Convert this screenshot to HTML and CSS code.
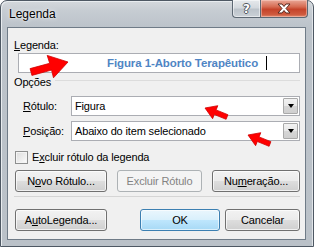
FILE: index.html
```html
<!DOCTYPE html>
<html lang="pt">
<head>
<meta charset="utf-8">
<title>Legenda</title>
<link rel="stylesheet" href="styles.css">
</head>
<body>
<div class="window">
  <div class="titlebar">
    <span class="title">Legenda</span>
    <div class="caption-btns">
      <div class="cbtn help"><span>?</span></div>
      <div class="cbtn close">
        <svg width="16" height="11" viewBox="0 0 16 11"><path d="M2 1h4l2 2.5L10 1h4l-4 4.5 4 4.5h-4L8 7.5 6 10H2l4-4.5z" fill="#fff" stroke="#5a2a20" stroke-width="1" stroke-linejoin="round"/></svg>
      </div>
    </div>
  </div>
  <div class="client">
    <div class="lbl"><u>L</u>egenda:</div>
    <div class="caption-input">
      <span class="caption-text">Figura 1-Aborto Terapêutico</span><span class="caret"></span>
    </div>
    <div class="group-row">
      <span class="group-title">Opções</span>
      <span class="group-line"></span>
    </div>
    <div class="field-row first">
      <span class="field-lbl"><u>R</u>ótulo:</span>
      <div class="combo"><span class="combo-text">Figura</span><span class="drop"><span class="tri"></span></span></div>
    </div>
    <div class="field-row">
      <span class="field-lbl"><u>P</u>osição:</span>
      <div class="combo"><span class="combo-text">Abaixo do item selecionado</span><span class="drop"><span class="tri"></span></span></div>
    </div>
    <div class="check-row">
      <span class="checkbox"></span>
      <span>E<u>x</u>cluir rótulo da legenda</span>
    </div>
    <div class="btn-row">
      <div class="btn w92">N<u>o</u>vo Rótulo...</div>
      <div class="btn w85 disabled">Excluir Rótulo</div>
      <div class="btn w88">Nu<u>m</u>eração...</div>
    </div>
    <div class="sep"></div>
    <div class="btn-row bottom">
      <div class="btn w92">A<u>u</u>toLegenda...</div>
      <div class="spacer"></div>
      <div class="btn ok">OK</div>
      <div class="btn cancel">Cancelar</div>
    </div>
  </div>
</div>
<svg class="arrows" width="314" height="247" viewBox="0 0 314 247">
  <g fill="#f00" stroke="#d00000" stroke-width="0.8" stroke-linejoin="round">
    <polygon points="31.9,75.4 51.5,70.1 53.5,77.8 68,62 47.2,55.4 49.7,63.3 30.1,68.6"/>
    <polygon points="227.9,114.7 216.1,109.9 217.8,105.7 205,108 212.6,118.7 214.3,114.5 226.1,119.3"/>
    <polygon points="270.9,141.7 259.1,136.9 260.8,132.7 248,135 255.6,145.7 257.3,141.5 269.1,146.3"/>
  </g>
</svg>
</body>
</html>
```
FILE: styles.css
```css
html, body {
  margin: 0;
  padding: 0;
}
body {
  width: 314px;
  height: 247px;
  overflow: hidden;
  position: relative;
  background: #ffffff;
  font-family: "Liberation Sans", Arial, sans-serif;
  font-size: 11px;
  letter-spacing: -0.15px;
  color: #000;
}
u { text-decoration: underline; text-underline-offset: 1px; }

.window {
  width: 314px;
  height: 247px;
  box-sizing: border-box;
  border: 1px solid #4e5863;
  border-radius: 7px 7px 0 0;
  background: linear-gradient(180deg, #d4d8dc 0px, #c6ccd2 10px, #bcc3ca 26px, #bac1c8 100%);
  box-shadow: inset 1px 1px 0 #e8ecef, inset -1px 0 0 #e0e4e8;
  display: flex;
  flex-direction: column;
}

.titlebar {
  height: 26px;
  display: flex;
  align-items: flex-start;
  position: relative;
}
.title {
  margin: 6px 0 0 8px;
  font-size: 12px;
  letter-spacing: 0;
  line-height: 15px;
  color: #000;
  text-shadow: 0 0 5px #eef1f4, 0 0 2px #ffffff;
}
.caption-btns {
  margin-left: auto;
  margin-right: 5px;
  margin-top: -1px;
  display: flex;
}
.cbtn {
  height: 18px;
  box-sizing: border-box;
  border: 1px solid #5d6873;
  border-top: none;
  display: flex;
  align-items: center;
  justify-content: center;
}
.help {
  width: 28px;
  border-right: none;
  border-radius: 0 0 0 4px;
  background: linear-gradient(180deg, #e6e9ec 0%, #d4d9de 45%, #bcc3ca 55%, #cbd1d7 100%);
  box-shadow: inset 0 0 0 1px rgba(255,255,255,0.5);
}
.help span {
  font-family: "DejaVu Sans", sans-serif;
  font-weight: bold;
  font-size: 12px;
  color: #fff;
  letter-spacing: 0;
  text-shadow: -1px 0 #50585f, 1px 0 #50585f, 0 -1px #50585f, 0 1px #50585f;
  line-height: 12px;
}
.close {
  width: 48px;
  border-radius: 0 0 4px 0;
  background: linear-gradient(180deg, #e9a797 0%, #d66b52 40%, #c5432a 55%, #cf5a3e 85%, #e08a70 100%);
  box-shadow: inset 0 0 0 1px rgba(255,220,210,0.45);
}
.close svg { display: block; }

.client {
  flex: 1;
  margin: 0 7px 6px 6px;
  border: 1px solid #6f7b87;
  background: #f0f0f0;
  padding: 10px 5px 0 6px;
  display: flex;
  flex-direction: column;
}

.lbl {
  height: 15px;
  line-height: 15px;
}
.caption-input {
  margin-left: 4px;
  height: 20px;
  box-sizing: border-box;
  border: 1px solid #abadb3;
  background: #fff;
  display: flex;
  align-items: center;
  padding-left: 88px;
}
.caption-text {
  font-weight: bold;
  font-size: 11.5px;
  letter-spacing: -0.1px;
  color: #4f85c4;
}
.caret {
  width: 1px;
  height: 14px;
  background: #000;
  margin-left: 8px;
}

.group-row {
  margin-top: 2px;
  height: 15px;
  display: flex;
  align-items: center;
  line-height: 15px;
}
.group-line {
  flex: 1;
  height: 0;
  border-top: 1px solid #dcdcdc;
  margin-left: 4px;
  margin-top: -5px;
}

.field-row {
  margin-top: 5px;
  height: 20px;
  display: flex;
  align-items: center;
}
.field-row.first { margin-top: 6px; }
.field-lbl {
  width: 48px;
  padding-left: 9px;
  line-height: 15px;
}
.combo {
  flex: 1;
  height: 20px;
  box-sizing: border-box;
  border: 1px solid #abadb3;
  background: #fff;
  display: flex;
  align-items: center;
}
.combo-text {
  flex: 1;
  padding-left: 3px;
}
.drop {
  width: 15px;
  height: 16px;
  box-sizing: border-box;
  margin-right: 1px;
  border: 1px solid #a9a9a9;
  border-radius: 1px;
  background: linear-gradient(180deg, #f2f2f2 0%, #e8e8e8 50%, #d6d6d6 51%, #cfcfcf 100%);
  display: flex;
  align-items: center;
  justify-content: center;
}
.tri {
  width: 0;
  height: 0;
  border-left: 3.5px solid transparent;
  border-right: 3.5px solid transparent;
  border-top: 4px solid #000;
}

.check-row {
  margin-top: 9px;
  height: 15px;
  display: flex;
  align-items: center;
  line-height: 15px;
}
.checkbox {
  width: 13px;
  height: 13px;
  box-sizing: border-box;
  border: 1px solid #8e8f8f;
  background: linear-gradient(135deg, #dcdcdc 0%, #f2f2f2 70%, #ffffff 100%);
  box-shadow: inset 0 0 0 1px #f4f4f4;
  margin-right: 4px;
  margin-left: 1px;
}

.btn-row {
  margin-top: 5px;
  display: flex;
  gap: 10px;
  padding-left: 1px;
}
.btn-row.bottom {
  margin-top: 12px;
  gap: 5px;
}
.spacer { flex: 1; }
.btn {
  height: 22px;
  box-sizing: border-box;
  border: 1px solid #707070;
  border-radius: 3px;
  background: linear-gradient(180deg, #f2f2f2 0%, #ebebeb 48%, #dddddd 52%, #cfcfcf 100%);
  box-shadow: inset 0 0 0 1px rgba(255,255,255,0.7);
  display: flex;
  align-items: center;
  justify-content: center;
  line-height: 15px;
}
.w92 { width: 92px; }
.w85 { width: 85px; }
.w88 { width: 88px; }
.btn.disabled {
  border-color: #adb2b5;
  background: #f4f4f4;
  color: #838383;
  box-shadow: none;
}
.btn.ok {
  width: 80px;
  border-color: #3c7fb1;
  background: linear-gradient(180deg, #eaf6fd 0%, #d9f0fc 48%, #bee6fd 52%, #a7d9f5 100%);
  box-shadow: inset 0 0 0 1px rgba(255,255,255,0.6);
}
.btn.cancel { width: 75px; }

.sep {
  margin-top: 4px;
  height: 0;
  border-top: 1px solid #d5d5d5;
}

.arrows {
  position: absolute;
  left: 0;
  top: 0;
  pointer-events: none;
}
```
